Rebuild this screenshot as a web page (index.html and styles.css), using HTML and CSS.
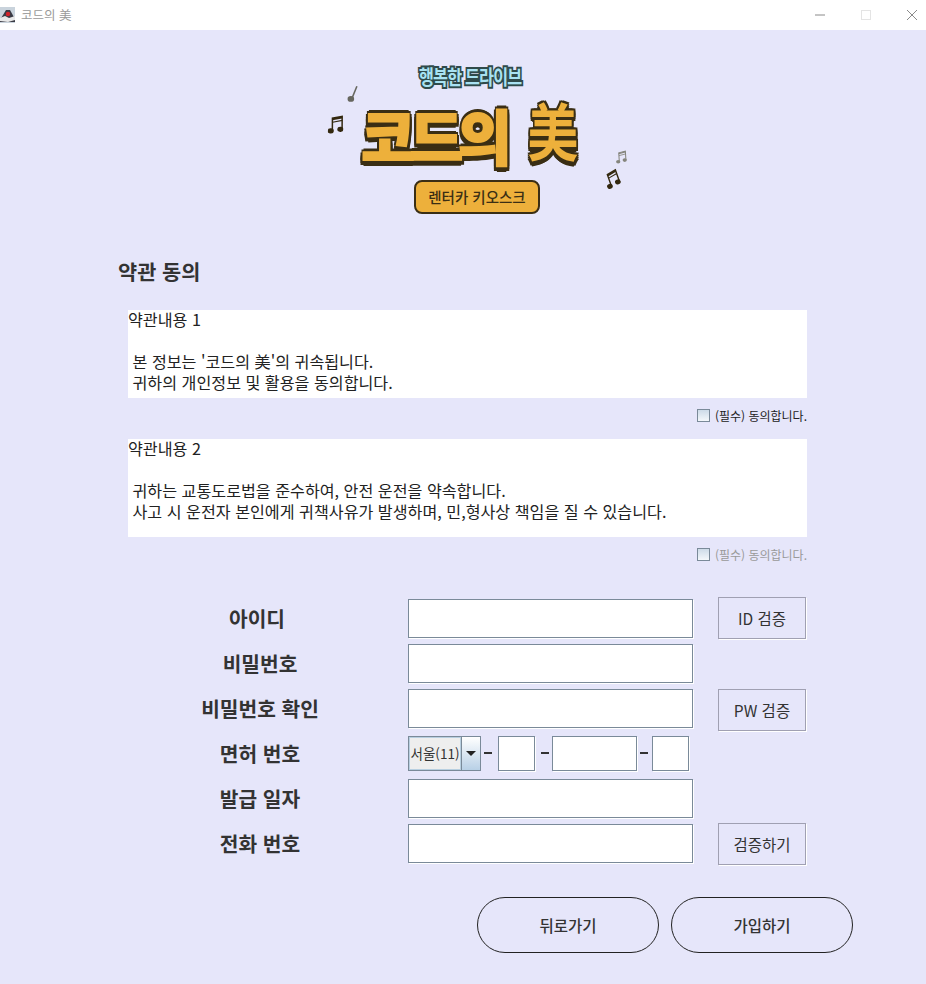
FILE: index.html
```html
<!DOCTYPE html>
<html lang="ko">

<head>
    <meta charset="UTF-8">
    <title>코드의 美</title>
    <link rel="stylesheet" href="styles.css">
</head>

<body>
    <svg class="defs" width="0" height="0">
        <symbol id="beamed-note" viewBox="0 0 16 20">
            <path d="M4.8 16.5L4 4L13.6 1.5L14.4 14" fill="none" stroke="currentColor" stroke-width="1.5" />
            <path d="M4 4L13.6 1.5V3.6L4.2 6.1Z" fill="currentColor" />
            <path d="M4.4 8L14 5.5" fill="none" stroke="currentColor" stroke-width="1.2" />
            <ellipse cx="3.2" cy="16.8" rx="3.1" ry="2.6" fill="currentColor" />
            <ellipse cx="12.7" cy="14.5" rx="3.1" ry="2.6" fill="currentColor" />
        </symbol>
    </svg>

    <header class="titlebar">
        <svg class="app-icon" viewBox="0 0 15 16">
            <rect width="15" height="16" fill="#c9d3dc" />
            <path d="M0 13L6 3L10 3L15 12V15H0Z" fill="#3a3a44" />
            <path d="M0 11L5 9L9 11L15 9V13L8 15L0 14Z" fill="#e8e8e8" />
            <circle cx="8" cy="7" r="2.2" fill="#d2232a" />
        </svg>
        <span class="app-title">코드의 美</span>
        <div class="win-controls">
            <svg viewBox="0 0 10 10" class="win-btn"><path d="M0 5H10" stroke="#8a8a8a" /></svg>
            <svg viewBox="0 0 10 10" class="win-btn"><rect x="0.5" y="0.5" width="9" height="9" fill="none" stroke="#e4e4e4" /></svg>
            <svg viewBox="0 0 10 10" class="win-btn"><path d="M0 0L10 10M10 0L0 10" stroke="#8a8a8a" /></svg>
        </div>
    </header>

    <main class="page">
        <div class="logo">
            <svg class="note note-quarter" viewBox="0 0 10 16">
                <path d="M4.5 12L9 1" stroke="currentColor" stroke-width="1.4" fill="none" />
                <ellipse cx="3.5" cy="12.5" rx="3" ry="2.6" fill="currentColor" />
            </svg>
            <svg class="note note-left"><use href="#beamed-note" /></svg>
            <svg class="note note-small"><use href="#beamed-note" /></svg>
            <svg class="note note-right"><use href="#beamed-note" /></svg>

            <div class="logo-tag">행복한 드라이브</div>
            <div class="logo-name">
                <span class="logo-hangul">코드의</span>
                <span class="logo-hanja">美</span>
            </div>
            <div class="logo-pill">렌터카 키오스크</div>
        </div>

        <h1 class="section-title">약관 동의</h1>

        <section class="terms">
            <div class="terms-box"><div class="terms-text">약관내용 1

 본 정보는 '코드의 美'의 귀속됩니다.
 귀하의 개인정보 및 활용을 동의합니다.</div></div>
            <label class="agree"><span class="check"></span>(필수) 동의합니다.</label>

            <div class="terms-box terms-box-tall"><div class="terms-text">약관내용 2

 귀하는 교통도로법을 준수하여, 안전 운전을 약속합니다.
 사고 시 운전자 본인에게 귀책사유가 발생하며, 민,형사상 책임을 질 수 있습니다.</div></div>
            <label class="agree agree-off"><span class="check"></span>(필수) 동의합니다.</label>
        </section>

        <form class="signup">
            <label class="field-label field-label-id">아이디</label>
            <input class="text-input" type="text">
            <button class="small-btn btn-id" type="button">ID 검증</button>

            <label class="field-label">비밀번호</label>
            <input class="text-input" type="text">
            <span></span>

            <label class="field-label">비밀번호 확인</label>
            <input class="text-input" type="text">
            <button class="small-btn btn-pw" type="button">PW 검증</button>

            <label class="field-label">면허 번호</label>
            <div class="license">
                <div class="combo">
                    <span class="combo-value">서울(11)</span>
                    <span class="combo-arrow"></span>
                </div>
                <span class="dash"></span>
                <input class="text-input part-short" type="text">
                <span class="dash"></span>
                <input class="text-input part-long" type="text">
                <span class="dash"></span>
                <input class="text-input part-short" type="text">
            </div>
            <span></span>

            <label class="field-label">발급 일자</label>
            <input class="text-input" type="text">
            <span></span>

            <label class="field-label">전화 번호</label>
            <input class="text-input" type="text">
            <button class="small-btn btn-phone" type="button">검증하기</button>
        </form>

        <div class="actions">
            <button class="round-btn" type="button">뒤로가기</button>
            <button class="round-btn" type="button">가입하기</button>
        </div>
    </main>
</body>

</html>
```

FILE: styles.css
```css
/* Basic page styling */
html,
body {
    margin: 0;
    height: 984px;
    overflow: hidden;
}

body {
    font-family: "Noto Sans CJK KR", "Noto Sans", sans-serif;
    background-color: #e6e6fa;
    color: #333;
}

.defs {
    position: absolute;
}

/* Window title bar */
.titlebar {
    display: flex;
    align-items: center;
    height: 30px;
    background-color: #fff;
}

.app-icon {
    width: 15px;
    height: 16px;
    flex: none;
}

.app-title {
    margin-left: 6px;
    margin-bottom: 2px;
    font-size: 12.5px;
    color: #999;
}

.win-controls {
    display: flex;
    gap: 36px;
    margin-left: auto;
    margin-right: 9px;
}

.win-btn {
    width: 10px;
    height: 10px;
}

/* Logo */
.logo {
    position: relative;
    display: flex;
    flex-direction: column;
    align-items: center;
    width: 340px;
    height: 228px;
    margin-left: 300px;
    padding-top: 33px;
    box-sizing: border-box;
}

.logo-tag {
    font-size: 20px;
    line-height: 28px;
    font-weight: 700;
    letter-spacing: -1px;
    color: #a9e2f2;
    -webkit-text-stroke: 4px #2f4a4a;
    paint-order: stroke fill;
    transform: scaleX(0.81);
}

.logo-name {
    display: flex;
    align-items: center;
    gap: 20px;
    height: 76px;
    margin-top: 5px;
    font-weight: 900;
    color: #edb03b;
}

/* thick yellow letters on a dark outline with a drop below */
.logo-hangul {
    font-size: 58px;
    line-height: 76px;
    letter-spacing: -5px;
    -webkit-text-stroke: 2px #edb03b;
    text-shadow: 3px 0 0 #3a2e14, -3px 0 0 #3a2e14, 0 -3px 0 #3a2e14, 0 3px 0 #3a2e14,
        2px 2px 0 #3a2e14, -2px 2px 0 #3a2e14, 2px -2px 0 #3a2e14, -2px -2px 0 #3a2e14,
        3px 3px 0 #3a2e14, -3px 3px 0 #3a2e14, 3px 5px 0 #3a2e14, -3px 5px 0 #3a2e14, 0 6px 0 #3a2e14;
    transform: scaleY(1.02);
}

.logo-hanja {
    margin: 0 -5px 11px;
    font-size: 62px;
    font-weight: 700;
    line-height: 76px;
    text-shadow: 2px 0 0 #3a2e14, -2px 0 0 #3a2e14, 0 -2px 0 #3a2e14, 0 2px 0 #3a2e14,
        2px 2px 0 #3a2e14, -2px 2px 0 #3a2e14, 2px -2px 0 #3a2e14, -2px -2px 0 #3a2e14,
        2px 4px 0 #3a2e14, -2px 4px 0 #3a2e14, 0 5px 0 #3a2e14;
    transform: scaleX(0.82);
}

.logo-pill {
    width: 122px;
    height: 30px;
    margin-top: 8px;
    margin-left: 14px;
    border: 2px solid #3a2e14;
    border-radius: 8px;
    background-color: #edb03b;
    font-size: 14.5px;
    font-weight: 500;
    line-height: 30px;
    text-align: center;
    color: #3a2e14;
}

.note {
    position: absolute;
    color: #33280f;
}

.note-quarter {
    left: 47px;
    top: 55px;
    width: 11px;
    height: 18px;
    color: #66665e;
}

.note-left {
    left: 28px;
    top: 84px;
    width: 16px;
    height: 21px;
    transform: rotate(4deg);
}

.note-small {
    left: 316px;
    top: 120px;
    width: 11px;
    height: 14px;
    color: #85857c;
}

.note-right {
    left: 305px;
    top: 139px;
    width: 15px;
    height: 20px;
    transform: rotate(-16deg);
}

/* Terms section */
.section-title {
    margin: -1px 0 25px 118px;
    font-size: 20.8px;
    font-weight: 700;
    line-height: 28px;
}

.terms {
    display: flex;
    flex-direction: column;
    width: 679px;
    margin-left: 128px;
}

.terms-box {
    height: 88px;
    background-color: #fff;
}

.terms-text {
    margin-top: -1px;
    font-size: 16.15px;
    line-height: 21px;
    white-space: pre;
    color: #222;
}

.terms-box-tall {
    height: 98px;
}

.agree {
    display: flex;
    align-items: center;
    justify-content: flex-end;
    gap: 5px;
    box-sizing: border-box;
    height: 41px;
    padding-bottom: 7px;
    font-size: 12px;
    color: #222;
}

.agree-off {
    color: #999;
}

.check {
    box-sizing: border-box;
    width: 13px;
    height: 13px;
    border: 1px solid #7a8a99;
    background: linear-gradient(#cddbe8, #f4f8fb);
}

/* Signup form */
.signup {
    display: grid;
    grid-template-columns: 280px 285px 88px;
    grid-auto-rows: 39px;
    column-gap: 8px;
    row-gap: 6px;
    align-items: center;
    margin: 21px 0 0 120px;
}

.field-label {
    margin-bottom: 2px;
    font-size: 20.3px;
    font-weight: 700;
    text-align: center;
}

.field-label-id {
    padding-right: 6px;
}

.text-input {
    box-sizing: border-box;
    width: 100%;
    height: 100%;
    margin: 0;
    padding: 0;
    border: 1px solid #7a8a99;
    background-color: #fff;
    box-shadow: 1px 1px 0 #fff;
}

.small-btn {
    grid-column: 3;
    align-self: start;
    width: 88px;
    height: 42px;
    margin-left: 17px;
    border: 1px solid #a0a0b2;
    outline: none;
    background-color: #e6e6fa;
    box-shadow: 1px 1px 0 #fff;
    font-family: inherit;
    font-size: 15.5px;
    color: #333;
}

.btn-id {
    margin-top: -2px;
}

.btn-phone {
    margin-top: -1px;
}

/* License number row */
.license {
    display: flex;
    align-items: center;
    height: 35px;
}

.combo {
    display: flex;
    width: 73px;
    height: 35px;
    box-sizing: border-box;
    border: 1px solid #7a8a99;
}

.combo-value {
    width: 52px;
    box-sizing: border-box;
    border: 1px solid #b8cfe0;
    background-color: #eee;
    font-size: 13.5px;
    line-height: 31px;
    text-align: center;
    white-space: nowrap;
}

.combo-arrow {
    position: relative;
    flex: 1;
    border-left: 1px solid #7a8a99;
    background: linear-gradient(#fff, #b8d0e6);
}

.combo-arrow::after {
    content: "";
    position: absolute;
    left: 4px;
    top: 14px;
    border: 5px solid transparent;
    border-top: 5px solid #222;
    border-bottom: none;
}

.dash {
    width: 8px;
    height: 2px;
    margin: 0 4px 2px 3px;
    background-color: #333;
}

.part-short {
    width: 37px;
}

.part-long {
    width: 85px;
}

.dash:nth-child(2) {
    margin-right: 6px;
}

.dash:nth-child(4) {
    margin: 0 3px 2px 6px;
}

/* Bottom buttons */
.actions {
    display: flex;
    justify-content: flex-end;
    gap: 12px;
    margin: 34px 73px 0 0;
}

.round-btn {
    width: 182px;
    height: 56px;
    border: 1px solid #222;
    border-radius: 28px;
    background-color: transparent;
    font-family: inherit;
    font-size: 15.5px;
    font-weight: 500;
    color: #333;
}
```
